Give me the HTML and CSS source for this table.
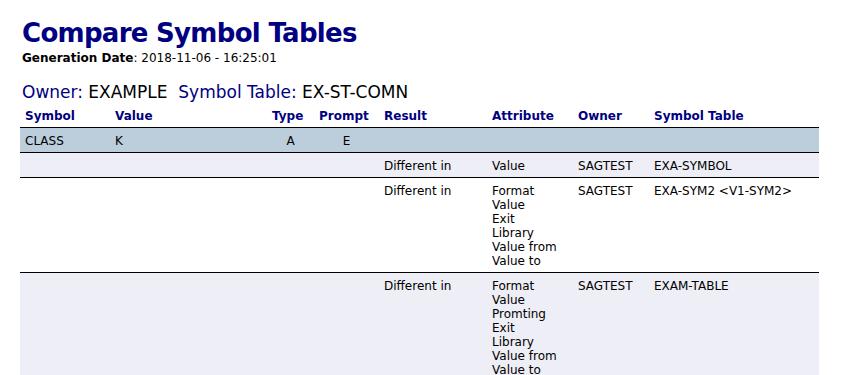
FILE: index.html
```html
<!DOCTYPE html>
<html>
<head>
<meta charset="utf-8">
<link rel="stylesheet" href="styles.css">
</head>
<body>
<div class="page">
  <div class="intro">
    <h1 class="title">Compare Symbol Tables</h1>
    <div class="gen"><span class="gen-label">Generation Date</span>: 2018-11-06 - 16:25:01</div>
    <div class="owner"><span class="lbl">Owner:</span> EXAMPLE&nbsp;&nbsp;<span class="lbl">Symbol Table:</span> EX-ST-COMN</div>
  </div>
  <table class="grid">
    <colgroup>
      <col class="c-sym"><col class="c-val"><col class="c-type"><col class="c-prm"><col class="c-res"><col class="c-att"><col class="c-own"><col class="c-tab">
    </colgroup>
    <thead>
      <tr>
        <th>Symbol</th><th>Value</th><th>Type</th><th>Prompt</th><th>Result</th><th>Attribute</th><th>Owner</th><th>Symbol Table</th>
      </tr>
    </thead>
    <tbody>
      <tr class="main">
        <td>CLASS</td><td>K</td><td class="ctr">A</td><td class="ctr">E</td><td></td><td></td><td></td><td></td>
      </tr>
      <tr class="alt">
        <td></td><td></td><td></td><td></td><td>Different in</td><td>Value</td><td>SAGTEST</td><td>EXA-SYMBOL</td>
      </tr>
      <tr>
        <td></td><td></td><td></td><td></td><td>Different in</td><td>Format<br>Value<br>Exit<br>Library<br>Value from<br>Value to</td><td>SAGTEST</td><td>EXA-SYM2 &lt;V1-SYM2&gt;</td>
      </tr>
      <tr class="alt">
        <td></td><td></td><td></td><td></td><td>Different in</td><td>Format<br>Value<br>Promting<br>Exit<br>Library<br>Value from<br>Value to</td><td>SAGTEST</td><td>EXAM-TABLE</td>
      </tr>
    </tbody>
  </table>
</div>
</body>
</html>
```
FILE: styles.css
```css
html, body {
  margin: 0;
  padding: 0;
  background: #ffffff;
}
body {
  font-family: "DejaVu Sans", Verdana, sans-serif;
  color: #000000;
}
.page {
  padding: 17px 0 0 20px;
}
.intro {
  padding-left: 2px;
}
.title {
  margin: 0;
  font-size: 26px;
  line-height: 32px;
  letter-spacing: -0.7px;
  font-weight: bold;
  color: #000080;
}
.gen {
  margin-top: 2px;
  font-size: 12px;
  line-height: 14px;
}
.gen-label {
  font-weight: bold;
}
.owner {
  margin-top: 17px;
  font-size: 17px;
  line-height: 20px;
}
.owner .lbl {
  color: #000080;
}
.grid {
  margin-top: 3px;
  width: 799px;
  border-collapse: collapse;
  table-layout: fixed;
  font-size: 12px;
  line-height: 14px;
}
.c-sym { width: 90px; }
.c-val { width: 157px; }
.c-type { width: 47px; }
.c-prm { width: 65px; }
.c-res { width: 108px; }
.c-att { width: 86px; }
.c-own { width: 76px; }
.c-tab { width: 170px; }
.grid th {
  text-align: left;
  font-weight: bold;
  color: #000080;
  padding: 4px 5px 4px 5px;
  border-bottom: 1px solid #000000;
  vertical-align: top;
}
.grid td {
  padding: 6px 5px 4px 5px;
  border-bottom: 1px solid #000000;
  vertical-align: top;
  white-space: nowrap;
}
.grid td.ctr {
  text-align: center;
}
.grid tr.main td {
  background: #bccddc;
}
.grid tr.alt td {
  background: #eeeef6;
}
```
